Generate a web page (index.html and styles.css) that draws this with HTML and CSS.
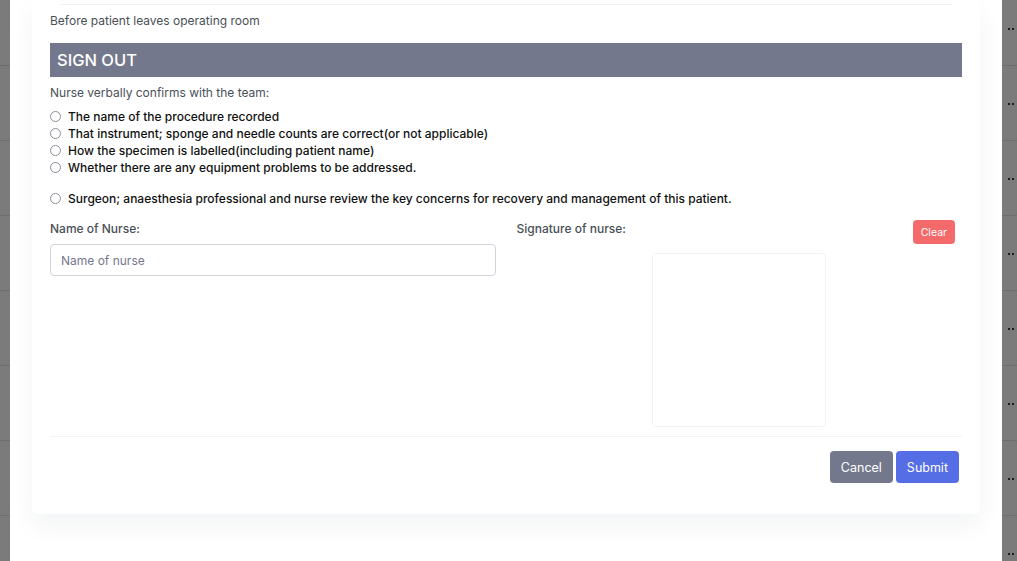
FILE: index.html
```html
<!DOCTYPE html>
<html lang="en">
<head>
  <meta charset="UTF-8">
  <meta name="viewport" content="width=device-width, initial-scale=1.0">
  <title>Surgical Safety Checklist - Sign Out</title>
  <link rel="stylesheet" href="styles.css">
</head>
<body>
  <div class="page">
    <div class="backdrop backdrop-left">
      <div class="bg-row"></div><div class="bg-row"></div><div class="bg-row"></div><div class="bg-row"></div>
      <div class="bg-row"></div><div class="bg-row"></div><div class="bg-row"></div><div class="bg-row"></div>
    </div>

    <div class="modal">
      <div class="card">
        <div class="divider"></div>
        <p class="intro">Before patient leaves operating room</p>

        <h4 class="section-title">SIGN OUT</h4>
        <p class="intro confirm">Nurse verbally confirms with the team:</p>

        <ul class="check-list">
          <li><span class="radio"></span>The name of the procedure recorded</li>
          <li><span class="radio"></span>That instrument; sponge and needle counts are correct(or not applicable)</li>
          <li><span class="radio"></span>How the specimen is labelled(including patient name)</li>
          <li><span class="radio"></span>Whether there are any equipment problems to be addressed.</li>
        </ul>
        <ul class="check-list review">
          <li><span class="radio"></span>Surgeon; anaesthesia professional and nurse review the key concerns for recovery and management of this patient.</li>
        </ul>

        <div class="form-row">
          <div class="form-group">
            <label for="nurseName">Name of Nurse:</label>
            <input type="text" id="nurseName" placeholder="Name of nurse">
          </div>
          <div class="form-group">
            <div class="sign-head">
              <label>Signature of nurse:</label>
              <button type="button" class="btn btn-sm btn-danger">Clear</button>
            </div>
            <div class="sign-pad"></div>
          </div>
        </div>

        <div class="card-footer">
          <button type="button" class="btn btn-secondary">Cancel</button>
          <button type="submit" class="btn btn-primary">Submit</button>
        </div>
      </div>
    </div>

    <div class="backdrop backdrop-right">
      <div class="bg-row"><span class="dots"><i></i><i></i></span></div>
      <div class="bg-row"><span class="dots"><i></i><i></i></span></div>
      <div class="bg-row"><span class="dots"><i></i><i></i></span></div>
      <div class="bg-row"><span class="dots"><i></i><i></i></span></div>
      <div class="bg-row"><span class="dots"><i></i><i></i></span></div>
      <div class="bg-row"><span class="dots"><i></i><i></i></span></div>
      <div class="bg-row"><span class="dots"><i></i><i></i></span></div>
      <div class="bg-row"><span class="dots"><i></i><i></i></span></div>
    </div>
  </div>
</body>
</html>
```

FILE: styles.css
```css
body {
  font-family: Inter, "Open Sans", sans-serif;
  font-size: 12px;
  color: #495057;
  margin: 0;
  padding: 0;
  background-color: #7b7b7b;
}
.page {
  display: flex;
  height: 561px;
  overflow: hidden;
}
.backdrop {
  background-color: #7b7b7b;
}
.backdrop-left {
  width: 10px;
}
.backdrop-right {
  width: 15px;
}
.bg-row {
  height: 74px;
  border-bottom: 1px solid #6e6e6e;
  position: relative;
}
.bg-row:first-child {
  margin-top: -9px;
}
.dots {
  position: absolute;
  left: 6px;
  top: 37px;
  display: flex;
  gap: 2px;
}
.dots i {
  width: 2px;
  height: 2px;
  background-color: #1e1e1e;
}
.modal {
  width: 992px;
  background-color: #fff;
  padding: 0 22px;
  box-sizing: border-box;
}
.card {
  background-color: #fff;
  padding: 4px 18px 31px;
  border-radius: 0 0 5px 5px;
  box-shadow: 0 12px 24px rgba(18, 38, 63, 0.05);
}
.divider {
  border-top: 1px solid #eff1f4;
  margin: 0 10px;
}
.intro {
  margin: 7px 0 0;
  line-height: 18px;
}
.section-title {
  margin: 13px 0 0;
  height: 34px;
  line-height: 34px;
  padding: 0 7px;
  background-color: #74788d;
  color: #fff;
  font-size: 16.5px;
  font-weight: 500;
}
.confirm {
  margin-top: 7px;
}
.check-list {
  list-style: none;
  margin: 6px 0 0;
  padding: 0;
}
.check-list li {
  display: flex;
  align-items: center;
  height: 17px;
  color: #111;
  font-weight: 500;
}
.check-list.review {
  margin-top: 14px;
}
.radio {
  width: 9px;
  height: 9px;
  border: 1px solid #8a8f98;
  border-radius: 50%;
  margin-right: 7px;
  flex-shrink: 0;
}
.form-row {
  display: grid;
  grid-template-columns: 1fr 1fr;
  column-gap: 21px;
  margin-top: 13px;
}
.form-group label {
  display: block;
  line-height: 18px;
  font-weight: 500;
}
.form-group input {
  display: block;
  width: 100%;
  box-sizing: border-box;
  height: 32px;
  margin-top: 6px;
  padding: 0 10px;
  border: 1px solid #ced4da;
  border-radius: 4px;
  font-family: inherit;
  font-size: 12px;
  color: #495057;
}
.form-group input::placeholder {
  color: #74788d;
}
.sign-head {
  display: flex;
  justify-content: space-between;
  align-items: flex-start;
  padding-right: 7px;
}
.sign-pad {
  width: 172px;
  height: 172px;
  margin: 9px auto 0;
  border: 1px solid #eff2f7;
  border-radius: 4px;
}
.btn {
  font-family: inherit;
  border: none;
  border-radius: 4px;
  color: #fff;
  cursor: pointer;
  font-size: 12.5px;
  height: 32px;
  padding: 0 11px;
}
.btn-sm {
  height: 24px;
  padding: 0 8px;
  font-size: 10.5px;
}
.btn-danger {
  background-color: #f46a6a;
}
.btn-secondary {
  background-color: #74788d;
}
.btn-primary {
  background-color: #556ee6;
}
.card-footer {
  display: flex;
  justify-content: flex-end;
  gap: 3px;
  border-top: 1px solid #eff2f7;
  margin-top: 9px;
  padding: 14px 3px 0 0;
}
```
